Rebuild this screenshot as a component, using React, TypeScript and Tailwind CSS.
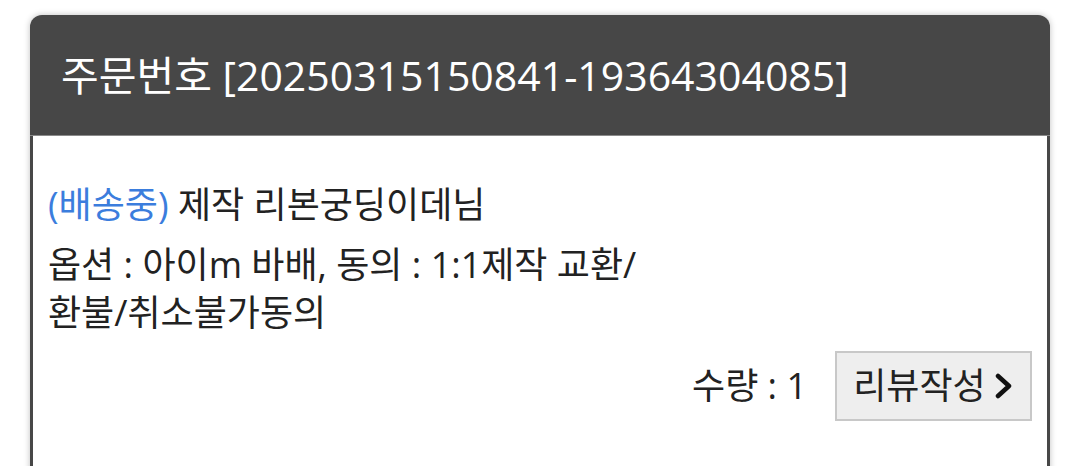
import React from 'react';

const font = { fontFamily: '"Open Sans", "Noto Sans CJK KR", sans-serif' };

export default function App() {
  return (
    <div className="min-h-[466px] w-[1080px] bg-white pt-[15px] px-[30px]" style={font}>
      <div className="rounded-t-[12px] bg-[#474747] shadow-[0_0_6px_rgba(0,0,0,0.25)]">
        {/* Header */}
        <div className="h-[121px] pl-[31px] pt-[34px] border-b border-[#8a8a8a]">
          <h2 className="text-[41px] leading-[52px] text-white whitespace-nowrap">
            주문번호 [20250315150841-19364304085]
          </h2>
        </div>

        {/* Body */}
        <div className="mx-[3px] bg-white pl-[15px] pr-[15px] pt-[45px] pb-[60px]">
          <p className="text-[36px] leading-[48px] text-[#222]">
            <span className="text-[#3b7ddd]">(배송중)</span> 제작 리본궁딩이데님
          </p>
          <p className="mt-[12px] text-[36px] leading-[48px] text-[#222]">
            옵션 : 아이m 바배, 동의 : 1:1제작 교환/
            <br />
            환불/취소불가동의
          </p>

          <div className="mt-[14px] flex items-center justify-end gap-[28px]">
            <span className="text-[36px] text-[#222]">수량 : 1</span>
            <button className="flex h-[70px] w-[197px] items-center justify-center gap-[8px] border-2 border-[#c8c8c8] bg-[#eeeeee] text-[36px] text-[#222]">
              리뷰작성
              <svg width="20" height="26" viewBox="0 0 20 26" fill="none">
                <path d="M4 3l11 10L4 23" stroke="#111" strokeWidth="4.5" strokeLinecap="round" strokeLinejoin="round" />
              </svg>
            </button>
          </div>
        </div>
      </div>
    </div>
  );
}
